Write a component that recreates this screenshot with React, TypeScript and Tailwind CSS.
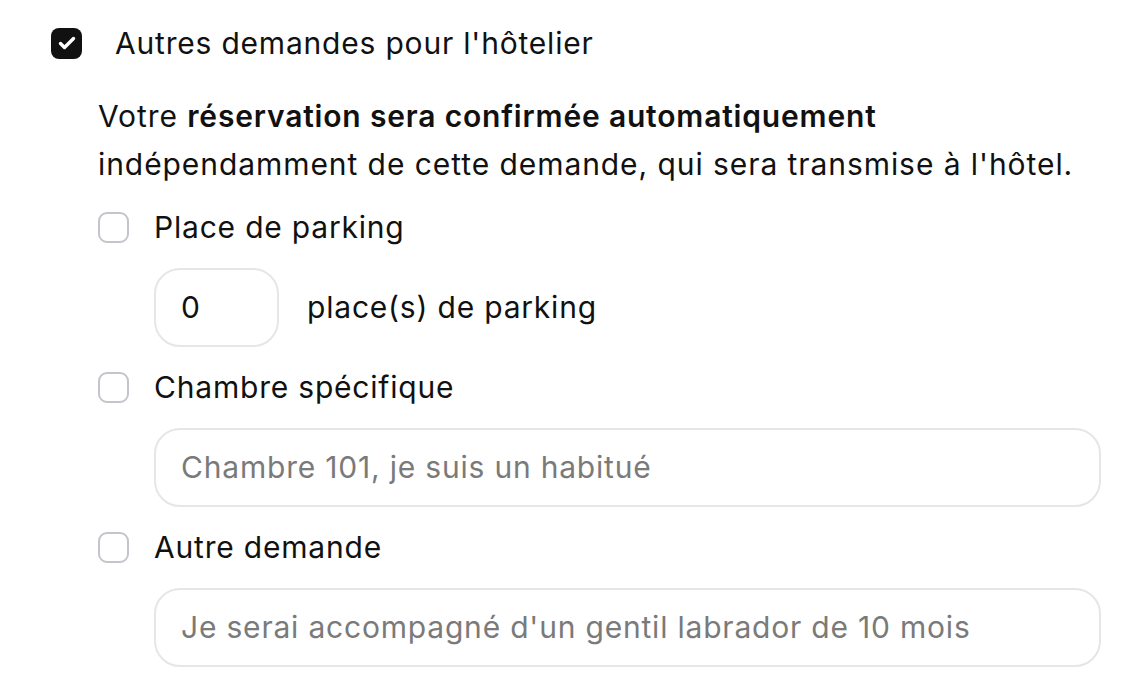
import React from "react";

function Checked() {
  return (
    <div className="w-[31px] h-[31px] rounded-[8px] bg-[#111] flex items-center justify-center shrink-0">
      <svg width="20" height="20" viewBox="0 0 20 20" fill="none">
        <path d="M3.5 10.5l4 4L16.5 5.5" stroke="white" strokeWidth="3.4" strokeLinecap="round" strokeLinejoin="round" />
      </svg>
    </div>
  );
}

function Unchecked() {
  return <div className="w-[31px] h-[31px] rounded-[9px] border-2 border-[#c4c4cc] bg-white shrink-0" />;
}

export default function App() {
  return (
    <div
      className="w-[1128px] h-[688px] bg-white text-[#111] overflow-hidden"
      style={{ fontFamily: "Inter, 'Noto Sans', sans-serif" }}
    >
      <div className="pl-[51px] pt-[19px]">
        <div className="flex items-center gap-[33px] h-[48px]">
          <Checked />
          <span className="text-[30px] leading-[48px] tracking-[0.8px]">Autres demandes pour l'hôtelier</span>
        </div>
        <div className="pl-[47px] pt-[25px] pr-[20px]">
          <p className="text-[30px] leading-[48px] tracking-[0.93px] whitespace-nowrap">
            Votre <span className="font-semibold tracking-[0.82px]">réservation sera confirmée automatiquement</span>
            <br />
            indépendamment de cette demande, qui sera transmise à l'hôtel.
          </p>
          <div className="flex flex-col">
            <div className="flex items-center gap-[25px] h-[78px]">
              <Unchecked />
              <span className="text-[30px] tracking-[0.8px]">Place de parking</span>
            </div>
            <div className="flex items-center gap-[28px] h-[82px] pl-[56px]">
              <div className="w-[125px] h-[79px] rounded-[26px] border-2 border-[#e6e6e6] flex items-center pl-[25px] text-[30px]">
                0
              </div>
              <span className="text-[30px] tracking-[0.8px]">place(s) de parking</span>
            </div>
            <div className="flex items-center gap-[25px] h-[78px]">
              <Unchecked />
              <span className="text-[30px] tracking-[0.8px]">Chambre spécifique</span>
            </div>
            <div className="flex items-center h-[82px] pl-[56px] pr-[7px]">
              <div className="flex-1 h-[79px] rounded-[26px] border-2 border-[#e6e6e6] flex items-center pl-[25px] text-[30px] text-[#7a7a7a] tracking-[0.8px]">
                Chambre 101, je suis un habitué
              </div>
            </div>
            <div className="flex items-center gap-[25px] h-[78px]">
              <Unchecked />
              <span className="text-[30px] tracking-[0.8px]">Autre demande</span>
            </div>
            <div className="flex items-center h-[82px] pl-[56px] pr-[7px]">
              <div className="flex-1 h-[79px] rounded-[26px] border-2 border-[#e6e6e6] flex items-center pl-[25px] text-[30px] text-[#7a7a7a] tracking-[0.8px]">
                Je serai accompagné d'un gentil labrador de 10 mois
              </div>
            </div>
          </div>
        </div>
      </div>
    </div>
  );
}
